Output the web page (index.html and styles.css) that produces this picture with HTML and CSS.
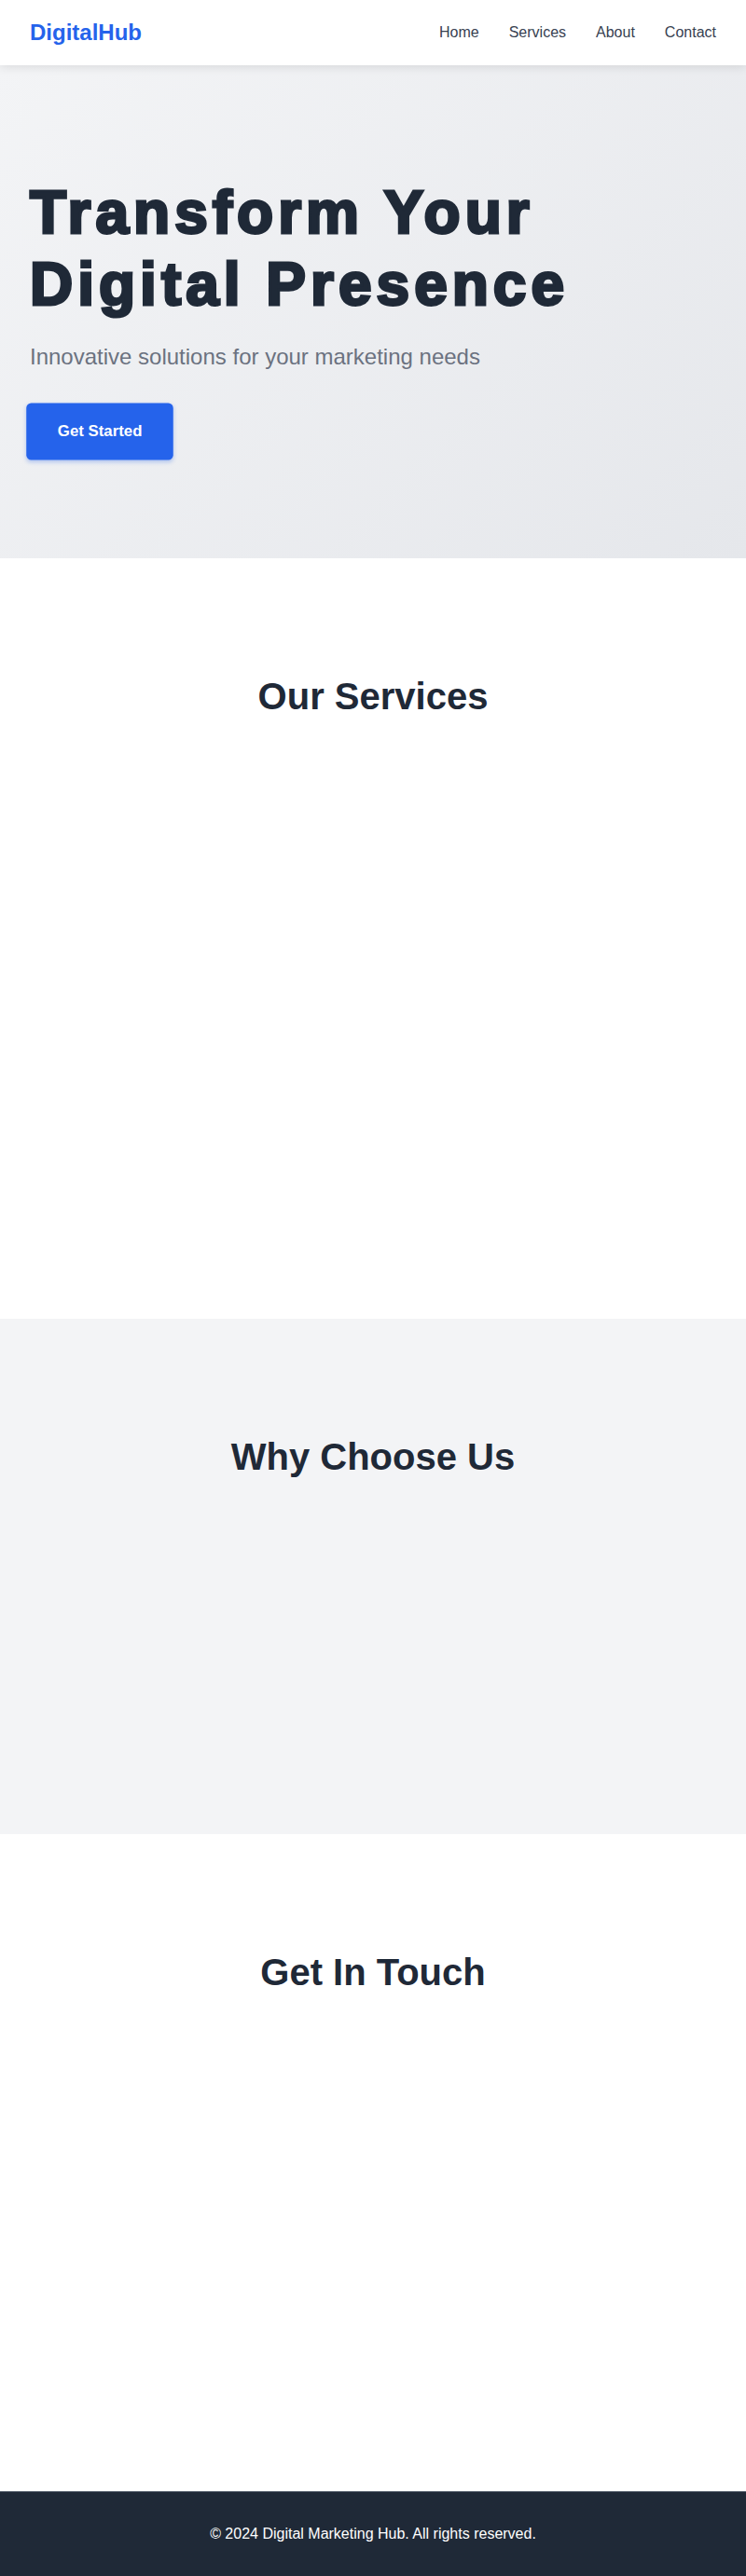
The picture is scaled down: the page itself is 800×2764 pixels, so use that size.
FILE: index.html
```html
<!DOCTYPE html>
<html lang="en">
<head>
<meta charset="UTF-8">
<title>DigitalHub</title>
<link rel="stylesheet" href="styles.css">
</head>
<body>
<nav class="navbar">
  <div class="logo">DigitalHub</div>
  <ul class="nav-links">
    <li><a href="#">Home</a></li>
    <li><a href="#">Services</a></li>
    <li><a href="#">About</a></li>
    <li><a href="#">Contact</a></li>
  </ul>
</nav>
<header class="hero">
  <h1 class="hero-title">Transform Your<br>Digital Presence</h1>
  <p class="hero-sub">Innovative solutions for your marketing needs</p>
  <a href="#" class="cta">Get Started</a>
</header>
<section class="section services">
  <h2 class="section-title">Our Services</h2>
  <div class="hidden-content services-grid"></div>
</section>
<section class="section why">
  <h2 class="section-title">Why Choose Us</h2>
  <div class="hidden-content why-grid"></div>
</section>
<section class="section contact">
  <h2 class="section-title">Get In Touch</h2>
  <div class="hidden-content contact-form"></div>
</section>
<footer class="footer">
  <p>&copy; 2024 Digital Marketing Hub. All rights reserved.</p>
</footer>
</body>
</html>
```
FILE: styles.css
```css
* { margin: 0; padding: 0; box-sizing: border-box; }
body {
  font-family: "Liberation Sans", Arial, sans-serif;
  line-height: 1.6;
  color: #1f2937;
  background: #ffffff;
}
.navbar {
  display: flex;
  justify-content: space-between;
  align-items: center;
  padding: 16px 32px;
  background: #ffffff;
  box-shadow: 0 2px 10px rgba(0, 0, 0, 0.1);
  position: relative;
  z-index: 10;
}
.logo { font-size: 24px; font-weight: 700; color: #2563eb; }
.nav-links { display: flex; list-style: none; gap: 32px; }
.nav-links a { color: #374151; text-decoration: none; font-size: 16px; }
.hero {
  background: linear-gradient(135deg, #f3f4f6 0%, #e5e7eb 100%);
  padding: 120px 32px 107px;
}
.hero-title {
  font-size: 64px;
  line-height: 1.2;
  font-weight: 800;
  letter-spacing: 5px;
  color: #1f2937;
  -webkit-text-stroke: 3px #1f2937;
  margin-bottom: 20px;
}
.hero-sub { font-size: 24px; color: #6b7280; margin-bottom: 32px; }
.cta {
  display: inline-block;
  background: #2563eb;
  color: #ffffff;
  font-weight: 700;
  font-size: 16px;
  text-decoration: none;
  padding: 16px 32px;
  border-radius: 5px;
  transform: scale(1.05);
  box-shadow: 0 2px 4px rgba(37, 99, 235, 0.3);
}
.section { padding: 124px 32px 80px; }
.section-title {
  font-size: 40px;
  line-height: 1.2;
  text-align: center;
  margin-bottom: 48px;
  color: #1f2937;
}
.why { background: #f3f4f6; }
.services-grid { height: 516px; }
.why-grid { height: 253px; }
.contact-form { height: 405px; }
.footer {
  background: #1f2937;
  color: #ffffff;
  text-align: center;
  padding: 32px;
  border-top: 1px solid #4b5563;
}
```
